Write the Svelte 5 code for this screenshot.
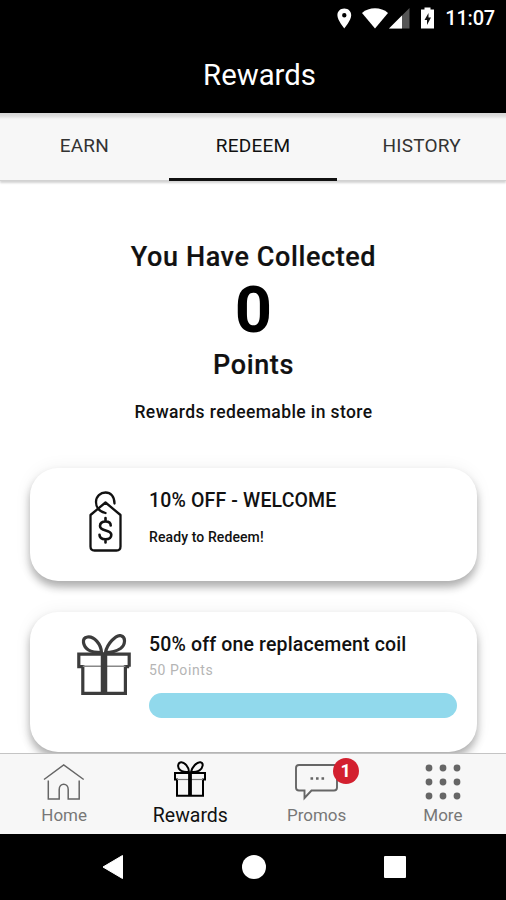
<script>
  // Tabs under the page title
  const tabs = ["EARN", "REDEEM", "HISTORY"];
  let activeTab = "REDEEM";

  const points = 0;

  // List of rewards, progress is a percentage of the bar
  const rewards = [
    { icon: "tag", title: "10% OFF - WELCOME", status: "Ready to Redeem!" },
    { icon: "gift", title: "50% off one replacement coil", cost: "50 Points", progress: 100 }
  ];

  const navItems = [
    { label: "Home", icon: "home" },
    { label: "Rewards", icon: "gift" },
    { label: "Promos", icon: "chat", badge: 1 },
    { label: "More", icon: "more" }
  ];
  let activeNav = "Rewards";

  const dots = [5, 19, 33];
</script>

<div class="app">
  <div class="status">
    <svg class="pin" width="15" height="21" viewBox="0 0 15 21">
      <path fill-rule="evenodd" d="M7.3 .5C3.2 .5 .4 3.4 .4 7.2c0 5 6.9 13.2 6.9 13.2s6.9-8.2 6.9-13.2C14.2 3.4 11.4 .5 7.3 .5zm0 4.5a2.200 2.200 0 1 1 0 4.400 2.200 2.200 0 0 1 0-4.400z" fill="#fff" />
    </svg>
    <svg class="wifi" width="26" height="21" viewBox="0 0 26 21">
      <path d="M0 5C7-1.200 19-1.200 26 5L13 20.600z" fill="#fff" />
    </svg>
    <svg class="signal" width="21" height="21" viewBox="0 0 21 21">
      <path d="M0 20.500L20.500 0v20.500z" fill="#555" />
      <path d="M0 20.500L13 7.500v13z" fill="#fff" />
    </svg>
    <svg class="battery" width="15" height="22" viewBox="0 0 15 22">
      <path d="M1 2.500h3.500V.5h6v2H14V21.500H1z" fill="#fff" />
      <path d="M8.500 6L4.500 13h2.500v5l4-7.500H8.500z" fill="#111" />
    </svg>
    <span class="time">11:07</span>
  </div>

  <header><h1>Rewards</h1></header>

  <div class="tabs">
    {#each tabs as tab}
      <button class="tab" class:active={tab === activeTab} on:click={() => (activeTab = tab)}>{tab}</button>
    {/each}
  </div>

  <main>
    <div class="summary">
      <p class="lead">You Have Collected</p>
      <p class="points">{points}</p>
      <p class="lead unit">Points</p>
      <p class="note">Rewards redeemable in store</p>
    </div>

    {#each rewards as reward}
      <div class="card {reward.icon}">
        <div class="picture">
          {#if reward.icon === "tag"}
            <svg width="34" height="62" viewBox="0 0 34 62" fill="none" stroke="#111" stroke-width="2.300" stroke-linejoin="round" stroke-linecap="round">
              <path d="M17.500 12.500L2.500 25v31.500q0 4 4 4h22q4 0 4-4V25z" />
              <path d="M26.500 13.500c0-7.500-4-11-9-11s-9.500 4-9.500 9.500c0 6 4 9.700 9.500 11" />
              <path d="M22.700 35.500c0-2.500-2-4-5.200-4s-5.500 1.600-5.500 4.400c0 6 11.300 3 11.300 8.800 0 2.800-2.300 4.500-5.800 4.500s-6-1.600-6-4.500M17.500 28v3.300M17.500 49.500v3" stroke-width="2.600" />
            </svg>
          {:else}
            <svg width="54" height="62" viewBox="0 0 54 62" fill="none" stroke="#3c3c3c" stroke-width="3.200">
              <path d="M1.800 20.100h50.400v12.600M1.800 18.500v14.200h4M52.200 32.700h-4M5.800 31v28.300h42.600V31" />
              <path d="M5.800 32.200h42.600" stroke="#888" stroke-width="1.500" />
              <path d="M27 18.500v41" stroke-width="6.500" />
              <path d="M24.500 18.500C24 10 17 2 10.500 3S6 12.500 11.500 16c3.500 2.200 7.500 2.500 13 2.500z" />
              <path d="M28.500 18.500C30 10 39 .5 44 1.700S48.500 11 43.500 14.500c-4.500 3-9 4-15 4z" />
            </svg>
          {/if}
        </div>
        <div class="info">
          <h2>{reward.title}</h2>
          {#if reward.status}<p class="ready">{reward.status}</p>{/if}
          {#if reward.cost}
            <p class="cost">{reward.cost}</p>
            <div class="bar"><div class="fill" style="width: {reward.progress}%"></div></div>
          {/if}
        </div>
      </div>
    {/each}
  </main>

  <nav>
    {#each navItems as item}
      <div class="nav-item" class:active={item.label === activeNav}>
        <div class="nav-icon">
          {#if item.icon === "home"}
            <svg width="42" height="42" viewBox="0 0 42 42" fill="none" stroke="#666" stroke-width="1.500">
              <path d="M1 20.500L20.700 6l20 14.500M5.300 21.500V40h10.900V30.500c0-7 9-7 9 0V40h11V21.500" />
            </svg>
          {:else if item.icon === "gift"}
            <svg width="34" height="42" viewBox="0 0 34 42" fill="none" stroke="#000" stroke-width="2">
              <path d="M4 21.500H2V15h30v6.500h-2M4 20.500v17.300h26V20.500" />
              <path d="M4 21.500h26" stroke="#777" stroke-width="1.200" />
              <path d="M17 14v24" stroke-width="3.800" />
              <path d="M16 14c0-5-4.500-10-8-9.700S4 10 7.500 12.300c2.500 1.600 5 1.700 8.500 1.700zM18 14c1-5 6-10.500 9.500-9.800S30 10 26.500 12.300C24 13.900 21.500 14 18 14z" />
            </svg>
          {:else if item.icon === "chat"}
            <svg width="44" height="42" viewBox="0 0 44 42" fill="none" stroke="#666" stroke-width="1.900">
              <path d="M4 6h35q3 0 3 3v19.500q0 3-3 3H16.500l-7 7.500v-7.500H4q-3 0-3-3V9q0-3 3-3z" />
              <path d="M15.500 19.500h2.600M21 19.500h2.600M26.500 19.500h2.600" stroke-width="2.400" />
            </svg>
            <span class="badge">{item.badge}</span>
          {:else}
            <svg width="38" height="42" viewBox="0 0 38 42" fill="#666">
              {#each dots as y}
                {#each dots as x}
                  <circle cx={x} cy={y + 4} r="3.400" />
                {/each}
              {/each}
            </svg>
          {/if}
        </div>
        <span class="label">{item.label}</span>
      </div>
    {/each}
  </nav>

  <div class="system">
    <svg width="22" height="26" viewBox="0 0 22 26"><path d="M20.500 1.500v23L1 13z" fill="#fff" stroke="#fff" stroke-linejoin="round" /></svg>
    <svg width="24" height="24" viewBox="0 0 24 24"><circle cx="12" cy="12" r="12" fill="#fff" /></svg>
    <svg width="22" height="22" viewBox="0 0 22 22"><rect width="22" height="22" rx="1" fill="#fff" /></svg>
  </div>
</div>

<style>
  :global(body) {
    margin: 0;
    overflow: hidden;
  }

  .app {
    width: 506px;
    height: 900px;
    display: flex;
    flex-direction: column;
    background: #fff;
    color: #111;
    font-family: Roboto, "Liberation Sans", sans-serif;
  }

  h1, h2, p {
    margin: 0;
  }

  svg {
    display: block;
  }

  .status {
    height: 36px;
    box-sizing: border-box;
    padding-right: 11px;
    display: flex;
    align-items: center;
    justify-content: flex-end;
    background: #000;
    color: #fff;
  }

  .wifi {
    margin-left: 10px;
  }

  .signal {
    margin-left: 1px;
  }

  .battery {
    margin-left: 10px;
  }

  .time {
    margin-left: 10px;
    font-size: 20px;
    font-weight: 500;
    letter-spacing: -0.2px;
  }

  header {
    height: 77px;
    padding-left: 13px;
    background: #000;
    color: #fff;
    text-align: center;
  }

  h1 {
    font-size: 29.3px;
    font-weight: 400;
    line-height: 78px;
  }

  .tabs {
    height: 68px;
    display: flex;
    background: linear-gradient(#d6d6d6, #dedede 3px, #f7f7f7 6px);
    border-bottom: 1px solid #d2d2d2;
    box-shadow: 0 2px 2px #d4d4d4;
    box-sizing: border-box;
  }

  .tab {
    flex: 1;
    margin-bottom: -1px;
    border: 0;
    border-bottom: 3px solid transparent;
    padding: 0;
    background: none;
    color: #333;
    font-family: inherit;
    font-size: 19px;
    letter-spacing: 0.2px;
  }

  .tab.active {
    border-bottom-color: #111;
    color: #111;
  }

  main {
    flex: 1;
    min-height: 0;
    overflow: hidden;
  }

  .summary {
    padding: 59px 0 0 1px;
    text-align: center;
    font-weight: 500;
  }

  .lead {
    font-size: 27px;
    line-height: 34px;
    letter-spacing: 0.6px;
    -webkit-text-stroke: 0.2px;
  }

  .points {
    font-size: 65px;
    line-height: 72px;
    font-weight: 700;
    color: #000;
  }

  .unit {
    margin-top: 2px;
  }

  .note {
    margin-top: 18px;
    font-size: 17.5px;
    line-height: 24px;
    letter-spacing: 0.4px;
  }

  .card {
    display: flex;
    box-sizing: border-box;
    width: 447px;
    margin: 0 0 31px 30px;
    border-radius: 28px;
    background: #fff;
    box-shadow: 0 6px 9px rgba(0, 0, 0, 0.3), 0 0 18px rgba(0, 0, 0, 0.06);
  }

  .card.tag {
    height: 113px;
    margin-top: 44px;
  }

  .card.gift {
    height: 140px;
  }

  .picture {
    width: 119px;
    padding-top: 22px;
    box-sizing: border-box;
  }

  .tag .picture {
    padding-left: 58px;
  }

  .gift .picture {
    padding-left: 47px;
  }

  .info {
    width: 308px;
    padding-top: 21px;
  }

  h2 {
    font-size: 19.5px;
    line-height: 24px;
    font-weight: 500;
    letter-spacing: 0.15px;
    white-space: nowrap;
  }

  .ready {
    margin-top: 14px;
    font-size: 14px;
    line-height: 20px;
    font-weight: 500;
    letter-spacing: 0.1px;
  }

  .cost {
    margin-top: 3px;
    font-size: 14px;
    line-height: 20px;
    letter-spacing: 0.6px;
    color: #b5b5b5;
  }

  .bar {
    height: 25px;
    margin-top: 13px;
    border-radius: 13px;
    overflow: hidden;
  }

  .fill {
    height: 100%;
    background: #91d9ec;
  }

  nav {
    height: 81px;
    box-sizing: border-box;
    border-top: 1px solid #c4c4c4;
    padding-left: 1px;
    display: flex;
    background: #f7f7f7;
  }

  .nav-item {
    flex: 1;
    display: flex;
    flex-direction: column;
    align-items: center;
    color: #777;
    font-size: 17px;
  }

  .nav-item.active {
    color: #111;
    font-size: 19.5px;
  }

  .nav-icon {
    position: relative;
    height: 41px;
    padding-top: 5px;
  }

  .active .nav-icon {
    padding-top: 4px;
    padding-bottom: 1px;
  }

  .label {
    line-height: 31px;
  }

  .badge {
    position: absolute;
    top: 4px;
    left: 38px;
    width: 26px;
    height: 26px;
    border-radius: 50%;
    background: #d3202f;
    color: #fff;
    font-size: 18px;
    line-height: 26px;
    font-weight: 700;
    text-align: center;
  }

  .system {
    height: 66px;
    padding-left: 1px;
    display: grid;
    grid-template-columns: 141px 141px 141px;
    justify-content: center;
    align-items: center;
    justify-items: center;
    background: #000;
  }
</style>
